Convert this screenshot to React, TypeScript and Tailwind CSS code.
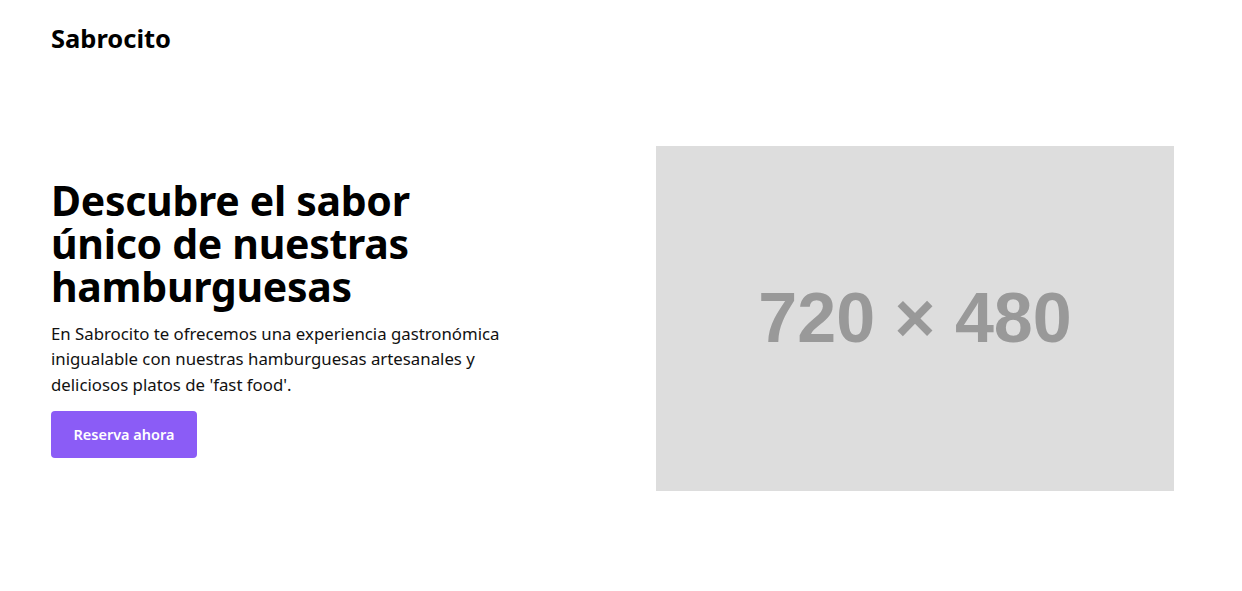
export default function App() {
  return (
    <div className="w-full h-[591px] bg-white text-black overflow-hidden" style={{ fontFamily: '"Noto Sans", "Open Sans", sans-serif' }}>
      <header className="px-[51px] pt-[22px]">
        <div className="text-[25.5px] leading-[32px] font-bold">Sabrocito</div>
      </header>
      <main className="flex items-center justify-between pl-[51px] pr-[68px] mt-[92px]">
        <div className="flex flex-col w-[470px]">
          <h1 className="text-[41px] leading-[43px] font-bold tracking-[-0.3px]">
            Descubre el sabor
            <br />
            único de nuestras
            <br />
            hamburguesas
          </h1>
          <p className="mt-[13px] text-[16.8px] leading-[25.6px] text-[#111]">
            En Sabrocito te ofrecemos una experiencia gastronómica inigualable con nuestras hamburguesas artesanales y deliciosos platos de 'fast food'.
          </p>
          <div className="mt-[14px]">
            <button className="w-[146px] h-[47px] rounded-[4px] bg-[#8b5cf6] text-white text-[14.5px] font-semibold">
              Reserva ahora
            </button>
          </div>
        </div>
        <div className="w-[518px] h-[345px] bg-[#dddddd] flex items-center justify-center">
          <span className="text-[#999999] text-[70px] font-bold" style={{ fontFamily: '"Liberation Sans", Arial, sans-serif' }}>
            720 × 480
          </span>
        </div>
      </main>
    </div>
  );
}
